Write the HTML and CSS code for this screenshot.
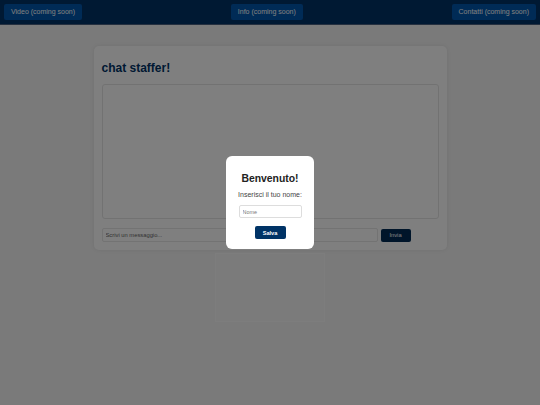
FILE: index.html
```html
<!DOCTYPE html>
<html lang="it">
<head>
<meta charset="utf-8">
<title>chat staffer</title>
<link rel="stylesheet" href="styles.css">
</head>
<body>
<nav class="navbar">
  <button class="nav-btn">Video (coming soon)</button>
  <button class="nav-btn">Info (coming soon)</button>
  <button class="nav-btn">Contatti (coming soon)</button>
</nav>
<main class="main">
  <section class="chat-card">
    <h2 class="chat-title">chat staffer!</h2>
    <div class="chat-box"></div>
    <div class="chat-input-row">
      <input class="chat-input" type="text" placeholder="Scrivi un messaggio...">
      <button class="send-btn">Invia</button>
    </div>
  </section>
  <div class="extra-box"></div>
</main>
<div class="overlay">
  <div class="modal">
    <h2 class="modal-title">Benvenuto!</h2>
    <p class="modal-text">Inserisci il tuo nome:</p>
    <input class="name-input" type="text" placeholder="Nome">
    <button class="save-btn">Salva</button>
  </div>
</div>
</body>
</html>
```
FILE: styles.css
```css
* { box-sizing: border-box; }
html, body { margin: 0; padding: 0; }
body {
  background: #f4f4f4;
  font-family: "Liberation Sans", Arial, sans-serif;
  width: 540px;
  height: 405px;
  overflow: hidden;
}
.navbar {
  height: 25px;
  background: #003366;
  border-bottom: 1px solid #4a6080;
  display: flex;
  justify-content: space-between;
  align-items: flex-start;
  padding: 4px 4px 0 4px;
}
.nav-btn {
  height: 16px;
  padding: 0 7px;
  border: none;
  border-radius: 2px;
  background: #0056ad;
  color: #fff;
  font-family: "Liberation Sans", Arial, sans-serif;
  font-size: 7px;
  line-height: 16px;
}
.main {
  display: flex;
  flex-direction: column;
  align-items: center;
  padding-top: 21px;
}
.chat-card {
  width: 353px;
  height: 204px;
  background: #fff;
  border-radius: 5px;
  box-shadow: 0 0 4px rgba(0,0,0,0.08);
  padding: 8px;
  display: flex;
  flex-direction: column;
}
.chat-title {
  margin: 7px 0 0 0;
  font-size: 12px;
  line-height: 15px;
  height: 15px;
  color: #003366;
  font-weight: bold;
}
.chat-box {
  margin-top: 8px;
  height: 135px;
  border: 1px solid #e4e4e4;
  border-radius: 3px;
}
.chat-input-row {
  margin-top: 9px;
  display: flex;
  align-items: center;
  gap: 3px;
}
.chat-input {
  width: 276px;
  height: 14px;
  border: 1px solid #e6e6e6;
  border-radius: 2px;
  padding: 0 3px;
  font-family: "Liberation Sans", Arial, sans-serif;
  font-size: 5.8px;
  outline: none;
}
.chat-input::placeholder { color: #666; }
.send-btn {
  width: 30px;
  height: 13px;
  border: none;
  border-radius: 2px;
  background: #002a55;
  color: #fff;
  font-family: "Liberation Sans", Arial, sans-serif;
  font-size: 5.8px;
  padding: 0;
}
.extra-box {
  margin-top: 3px;
  width: 110px;
  height: 69px;
  border: 1px solid #fbfbfb;
  background: #f6f6f6;
}
.overlay {
  position: fixed;
  inset: 0;
  background: rgba(0,0,0,0.5);
  display: flex;
  align-items: center;
  justify-content: center;
}
.modal {
  width: 88px;
  height: 93px;
  background: #fff;
  border-radius: 6px;
  display: flex;
  flex-direction: column;
  align-items: center;
  padding-top: 16px;
}
.modal-title {
  margin: 0;
  font-size: 10.4px;
  line-height: 13px;
  font-weight: bold;
  color: #222;
}
.modal-text {
  margin: 5px 0 0 0;
  font-size: 7px;
  line-height: 9px;
  color: #444;
}
.name-input {
  margin-top: 6px;
  width: 63px;
  height: 13px;
  border: 1px solid #ddd;
  border-radius: 2px;
  padding: 0 3px;
  font-family: "Liberation Sans", Arial, sans-serif;
  font-size: 5.4px;
  outline: none;
}
.name-input::placeholder { color: #777; }
.save-btn {
  margin-top: 8px;
  width: 31px;
  height: 13px;
  border: none;
  border-radius: 2px;
  background: #003366;
  color: #fff;
  font-family: "Liberation Sans", Arial, sans-serif;
  font-size: 5.6px;
  font-weight: bold;
  padding: 0;
}
```
